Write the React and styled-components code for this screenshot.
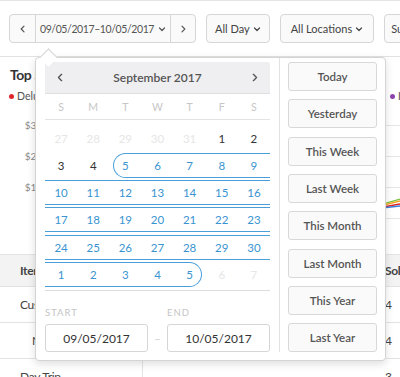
import React from 'react';
import styled, { createGlobalStyle, css } from 'styled-components';

const GlobalStyle = createGlobalStyle`
  * { box-sizing: border-box; }
  body {
    margin: 0;
    background: #fff;
    font-family: Lato, "Open Sans", Arial, sans-serif;
    color: #3c3c3c;
  }
`;

const BLUE = '#4a9fd9';
const BLUE_TEXT = '#3a94d0';

//style
const Page = styled.div`
  width: 400px;
  height: 377px;
  overflow: hidden;
  border-top: 1px solid #e4e4e4;
`;

const Toolbar = styled.div`
  display: flex;
  align-items: center;
  gap: 10px;
  height: 56px;
  padding-left: 9px;
  border-bottom: 1px solid #e2e2e2;
  white-space: nowrap;
`;

const DateGroup = styled.div`
  position: relative;
  flex-shrink: 0;
  display: flex;
  height: 29px;
  border: 1px solid #d6d6d6;
  border-radius: 4px;
  background: #fafafa;
`;

const Segment = styled.div`
  display: flex;
  align-items: center;
  justify-content: center;
  gap: 4px;
  width: ${p => p.$w}px;
  color: #555;
  font-size: 10.5px;
  letter-spacing: ${p => (p.$tight ? '-0.4px' : '0')};
  ${p => p.$divided && css`
    border-left: 1px solid #d6d6d6;
    border-right: 1px solid #d6d6d6;
  `}
`;

const ToolButton = styled.div`
  flex-shrink: 0;
  display: flex;
  align-items: center;
  gap: 3px;
  height: 29px;
  padding: 0 ${p => p.$pad}px;
  border: 1px solid #d6d6d6;
  border-radius: 4px;
  background: #fafafa;
  color: #444;
  font-size: 11px;
`;

const Popover = styled.div`
  position: absolute;
  top: 42px;
  left: 25px;
  z-index: 10;
  display: flex;
  width: 351px;
  padding: 4px 8px 8px 9px;
  background: #fff;
  border: 1px solid #d4d4d4;
  border-radius: 4px;
  box-shadow: 0 3px 8px rgba(0, 0, 0, 0.13);

  &::before {
    content: '';
    position: absolute;
    top: -7px;
    left: 6px;
    width: 12px;
    height: 12px;
    background: #fff;
    border-top: 1px solid #d4d4d4;
    border-left: 1px solid #d4d4d4;
    transform: rotate(45deg);
  }
`;

const Calendar = styled.div`
  width: 225px;
  display: flex;
  flex-direction: column;
`;

const MonthHeader = styled.div`
  display: flex;
  align-items: center;
  justify-content: space-between;
  height: 32px;
  padding: 0 11px;
  background: #efeff1;
  border-bottom: 1px solid #dfdfe2;
  border-radius: 2px 2px 0 0;
  color: #555;
`;

const MonthTitle = styled.span`
  font-size: 12px;
  font-weight: 600;
  color: #555;
`;

const WeekdayRow = styled.div`
  display: grid;
  grid-template-columns: repeat(7, 1fr);
  align-items: center;
  height: 26px;
  border-bottom: 1px solid #e3e3e3;
  color: #c6c6c6;
  font-size: 10.5px;
  text-align: center;
`;

const Weeks = styled.div`
  padding: 5.5px 0 1px;
  border-bottom: 1px solid #dcdcdc;
`;

const WeekRow = styled.div`
  display: grid;
  grid-template-columns: repeat(7, 1fr);
  height: 25px;
  margin-bottom: 2.3px;
`;

const DayCell = styled.div`
  position: relative;
  display: flex;
  align-items: center;
  justify-content: center;
  font-size: 11.5px;
  color: ${p => (p.$muted ? '#e6e6e6' : p.$inRange ? BLUE_TEXT : '#333')};

  ${p => p.$inRange && css`
    &::before {
      content: '';
      position: absolute;
      top: 0;
      bottom: 0;
      left: ${p.$start ? '4px' : '0'};
      right: ${p.$end ? '4px' : '0'};
      border-top: 1px solid ${BLUE};
      border-bottom: 1px solid ${BLUE};
      border-left: ${p.$start ? `1px solid ${BLUE}` : 'none'};
      border-right: ${p.$end ? `1px solid ${BLUE}` : 'none'};
      border-radius: ${p.$start ? '13px 0 0 13px' : p.$end ? '0 13px 13px 0' : '0'};
    }
  `}
`;

const RangeFields = styled.div`
  display: grid;
  grid-template-columns: 103px 19px 103px;
  row-gap: 5px;
  padding-top: 16px;
`;

const FieldLabel = styled.div`
  grid-column: ${p => p.$col};
  font-size: 9.5px;
  line-height: 12px;
  letter-spacing: 1px;
  color: #c4c4c4;
`;

const FieldBox = styled.div`
  grid-column: ${p => p.$col};
  grid-row: 2;
  display: flex;
  align-items: center;
  justify-content: center;
  height: 28px;
  border: 1px solid #d6d6d6;
  border-radius: 3px;
  font-size: 12px;
  color: #333;
`;

const Dash = styled.div`
  grid-column: 2;
  grid-row: 2;
  display: flex;
  align-items: center;
  justify-content: center;
  color: #cfcfcf;
  font-size: 11px;
`;

const Divider = styled.div`
  width: 1px;
  margin: -4px 8px 0 9px;
  background: #e2e2e2;
`;

const Presets = styled.div`
  width: 89px;
  display: flex;
  flex-direction: column;
  justify-content: space-between;
`;

const PresetButton = styled.div`
  display: flex;
  align-items: center;
  justify-content: center;
  height: 29px;
  border: 1px solid #d8d8d8;
  border-radius: 3px;
  background: #fafafa;
  color: #555;
  font-size: 11.5px;
  font-weight: 600;
`;

const ChartCard = styled.div`
  padding: 8px 0 0 10px;
`;

const CardTitle = styled.div`
  font-size: 14px;
  font-weight: 700;
  line-height: 20px;
  letter-spacing: -0.5px;
  color: #333;
`;

const Legend = styled.div`
  display: grid;
  grid-template-columns: repeat(5, 95.25px);
  margin-top: 4px;
  margin-left: -1px;
  font-size: 10.5px;
  line-height: 14px;
  color: #555;
  white-space: nowrap;
`;

const LegendItem = styled.div`
  display: flex;
  align-items: center;
  gap: 3px;

  &::before {
    content: '';
    width: 5px;
    height: 5px;
    border-radius: 50%;
    background: ${p => p.$color};
  }
`;

const Plot = styled.div`
  display: grid;
  grid-template-columns: 58px 332px;
  margin-top: 7px;
`;

const AxisLabels = styled.div`
  display: flex;
  flex-direction: column;
`;

const AxisLabel = styled.div`
  height: 31px;
  line-height: 31px;
  text-align: right;
  padding-right: 12px;
  font-size: 10px;
  color: #8a8a8a;
`;

const Table = styled.div`
  margin-top: 20px;
`;

const TableRow = styled.div`
  display: grid;
  grid-template-columns: 143px 235px 22px;
  height: ${p => (p.$head ? 33 : 36)}px;
  border-bottom: 1px solid #e3e3e3;
  ${p => p.$head && css`
    background: #f3f3f3;
    border-top: 1px solid #e3e3e3;
    font-weight: 700;
  `}
  font-size: 12px;
  letter-spacing: -0.3px;
  color: #444;
  white-space: nowrap;
`;

const Cell = styled.div`
  display: flex;
  align-items: center;
  padding-left: ${p => p.$pad || 0}px;
  overflow: hidden;
  ${p => p.$ruled && css`border-right: 1px solid #e3e3e3;`}
`;
//end style

const Chevron = ({ dir = 'down', size = 8 }) => {
  const paths = {
    down: 'M1.5 3l2.5 2.5L6.5 3',
    left: 'M5 1.2L2.2 4 5 6.8',
    right: 'M3 1.2L5.8 4 3 6.8',
  };
  return (
    <svg width={size} height={size} viewBox="0 0 8 8" fill="none" stroke="currentColor"
      strokeWidth="1.2" strokeLinecap="round" strokeLinejoin="round">
      <path d={paths[dir]} />
    </svg>
  );
};

const buildDays = () => {
  const days = [];
  for (let d = 27; d <= 31; d++) days.push({ d, muted: true });
  for (let d = 1; d <= 30; d++) days.push({ d, inRange: d >= 5, start: d === 5 });
  for (let d = 1; d <= 7; d++) days.push({ d, muted: d > 5, inRange: d <= 5, end: d === 5 });
  const weeks = [];
  for (let i = 0; i < days.length; i += 7) weeks.push(days.slice(i, i + 7));
  return weeks;
};

const presets = ['Today', 'Yesterday', 'This Week', 'Last Week', 'This Month', 'Last Month', 'This Year', 'Last Year'];
const legend = [
  ['#e0262b', 'Deluxe Burger'],
  ['#f5a623', 'Fries'],
  ['#7cc242', 'Milkshake'],
  ['#3f7fd8', 'Soda'],
  ['#8e44ad', 'Ice Cream'],
];
const rows = [
  ['Custom Amount', 20, '4'],
  ['Nachos', 32, '4'],
  ['Day Trip', 20, '3'],
];

export default function App() {
  const weeks = buildDays();

  return (
    <Page>
      <GlobalStyle />
      <Toolbar>
        <DateGroup>
          <Segment $w={25}><Chevron dir="left" /></Segment>
          <Segment $w={136} $divided $tight>
            09/05/2017–10/05/2017 <Chevron />
          </Segment>
          <Segment $w={24}><Chevron dir="right" /></Segment>

          <Popover>
            <Calendar>
              <MonthHeader>
                <Chevron dir="left" size={9} />
                <MonthTitle>September 2017</MonthTitle>
                <Chevron dir="right" size={9} />
              </MonthHeader>
              <WeekdayRow>
                {['S', 'M', 'T', 'W', 'T', 'F', 'S'].map((w, i) => <span key={i}>{w}</span>)}
              </WeekdayRow>
              <Weeks>
                {weeks.map((week, wi) => (
                  <WeekRow key={wi}>
                    {week.map((day, di) => (
                      <DayCell key={di} $muted={day.muted} $inRange={day.inRange}
                        $start={day.start} $end={day.end}>
                        {day.d}
                      </DayCell>
                    ))}
                  </WeekRow>
                ))}
              </Weeks>
              <RangeFields>
                <FieldLabel $col={1}>START</FieldLabel>
                <FieldLabel $col={3}>END</FieldLabel>
                <FieldBox $col={1}>09/05/2017</FieldBox>
                <Dash>–</Dash>
                <FieldBox $col={3}>10/05/2017</FieldBox>
              </RangeFields>
            </Calendar>
            <Divider />
            <Presets>
              {presets.map(p => <PresetButton key={p}>{p}</PresetButton>)}
            </Presets>
          </Popover>
        </DateGroup>
        <ToolButton $pad={8}>All Day <Chevron /></ToolButton>
        <ToolButton $pad={10}>All Locations <Chevron /></ToolButton>
        <ToolButton $pad={6}>Summary <Chevron /></ToolButton>
      </Toolbar>

      <ChartCard>
        <CardTitle>Top 5 Items</CardTitle>
        <Legend>
          {legend.map(([c, name]) => <LegendItem key={name} $color={c}>{name}</LegendItem>)}
        </Legend>
        <Plot>
          <AxisLabels>
            <AxisLabel>$3,000</AxisLabel>
            <AxisLabel>$2,000</AxisLabel>
            <AxisLabel>$1,000</AxisLabel>
            <AxisLabel>$0</AxisLabel>
          </AxisLabels>
          <svg width="332" height="124" viewBox="0 0 332 124" fill="none">
            {[15.5, 46.5, 77.5, 108.5].map(y => (
              <line key={y} x1="0" x2="332" y1={y} y2={y} stroke="#e6e6e6" />
            ))}
            <polyline points="0 104, 160 100, 318 93, 332 89" stroke="#7cc242" strokeWidth="1.3" />
            <polyline points="0 105, 160 101, 318 94.5, 332 91" stroke="#f5a623" strokeWidth="1.3" />
            <polyline points="0 106, 160 102, 318 96.5, 332 94" stroke="#e0262b" strokeWidth="1.3" />
            <polyline points="0 107, 160 103, 318 97.5, 332 96" stroke="#3f7fd8" strokeWidth="1.3" />
          </svg>
        </Plot>
      </ChartCard>

      <Table>
        <TableRow $head>
          <Cell $pad={20}>Item</Cell>
          <Cell />
          <Cell $pad={7}>Sold</Cell>
        </TableRow>
        {rows.map(([name, pad, sold]) => (
          <TableRow key={name}>
            <Cell $pad={pad} $ruled>{name}</Cell>
            <Cell />
            <Cell $pad={7}>{sold}</Cell>
          </TableRow>
        ))}
      </Table>
    </Page>
  );
}
